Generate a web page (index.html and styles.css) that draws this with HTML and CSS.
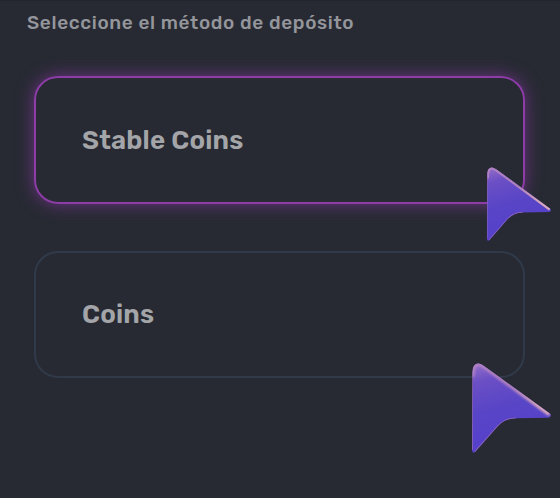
FILE: index.html
```
<!DOCTYPE html>
<html lang="es">
<head>
<meta charset="utf-8">
<title>Método de depósito</title>
<link rel="stylesheet" href="styles.css">
</head>
<body>
<main class="deposit">
  <h1 class="title">Seleccione el método de depósito</h1>
  <div class="methods">
    <div class="card card-active">
      <span class="name">Stable Coins</span>
      <svg class="pointer pointer-small" viewBox="0 0 80 90" preserveAspectRatio="none" aria-hidden="true">
        <defs>
          <linearGradient id="body" x1="0" y1="0" x2="0.25" y2="1">
            <stop offset="0" stop-color="#9870c8"/>
            <stop offset="0.22" stop-color="#6b4fc5"/>
            <stop offset="0.55" stop-color="#5845c6"/>
            <stop offset="1" stop-color="#5540cc"/>
          </linearGradient>
          <linearGradient id="edge" x1="0" y1="0" x2="1" y2="0.65">
            <stop offset="0" stop-color="#b080c4"/>
            <stop offset="0.55" stop-color="#ab7fbc"/>
            <stop offset="1" stop-color="#d8a8bc"/>
          </linearGradient>
          <clipPath id="shape"><path d="M1.5 9Q1.5 .5 7.5 .5Q10 .8 13 3L79.5 51Q81 54 77 54.8L45 55.2Q34 55.5 27 63L4 89Q1.5 91 1 87Z"/></clipPath>
          <filter id="soft"><feGaussianBlur stdDeviation="0.9"/></filter>
        </defs>
        <g clip-path="url(#shape)">
          <path fill="url(#body)" d="M0 0H80V90H0Z"/>
          <path class="shine" d="M1 14Q1 0 8 .5L13 3L79 51" stroke="url(#edge)" filter="url(#soft)"/>
          <path class="rim" d="M1 87L1.3 10M45 55.2Q34 55.5 27 63L4 89"/>
        </g>
      </svg>
    </div>
    <div class="card card-idle">
      <span class="name">Coins</span>
      <svg class="pointer pointer-large" viewBox="0 0 80 90" aria-hidden="true">
        <g clip-path="url(#shape)">
          <path fill="url(#body)" d="M0 0H80V90H0Z"/>
          <path class="shine" d="M1 14Q1 0 8 .5L13 3L79 51" stroke="url(#edge)" filter="url(#soft)"/>
          <path class="rim" d="M1 87L1.3 10M45 55.2Q34 55.5 27 63L4 89"/>
        </g>
      </svg>
    </div>
  </div>
</main>
</body>
</html>
```
FILE: styles.css
```
* { box-sizing: border-box; }
body {
  margin: 0;
  min-height: 498px;
  background: #272a33;
  border-top: 1px solid #23252c;
  font-family: Rubik, Roboto, sans-serif;
}
.deposit { padding: 10px 35px 0 34px; }
.title {
  margin: 0 0 41px -7px;
  font-size: 19px;
  line-height: 24px;
  font-weight: 500;
  letter-spacing: .65px;
  white-space: nowrap;
  color: #94969b;
}
.methods { display: grid; gap: 47px; }
.card {
  position: relative;
  display: flex;
  align-items: center;
  height: 128px;
  padding: 2px 0 0 46px;
  border: 2px solid #303a49;
  border-radius: 24px;
}
.card-idle { height: 127px; padding-top: 0; }
.card-active {
  border-color: #8e3ca8;
  box-shadow: 0 0 17px rgba(166, 61, 194, .55);
}
.name {
  font-size: 26px;
  line-height: 32px;
  font-weight: 600;
  letter-spacing: .18px;
  color: #a4a5a8;
}
.pointer { position: absolute; display: block; }
.pointer-small { width: 65px; height: 74px; right: -28px; bottom: -39px; }
.pointer-large { width: 80px; height: 90px; right: -28px; bottom: -77px; }
.shine { fill: none; stroke-width: 5; }
.rim { fill: none; stroke: #9468b8; stroke-width: 1.5; }
```
